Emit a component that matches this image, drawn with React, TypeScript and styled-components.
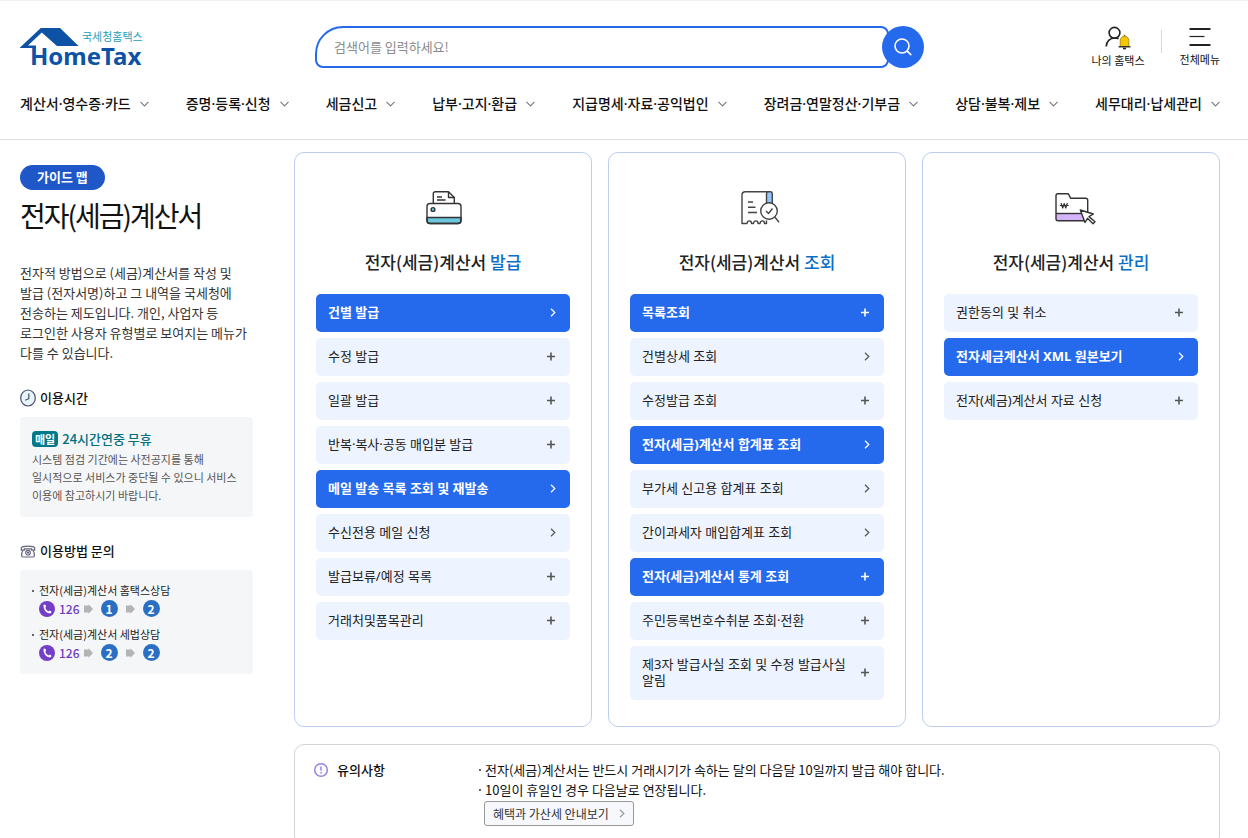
import React from 'react';
import styled, { createGlobalStyle, css } from 'styled-components';

const GlobalStyle = createGlobalStyle`
  *, *::before, *::after { box-sizing: border-box; }
  body {
    margin: 0;
    background: #fff;
    color: #222;
    font-family: "Noto Sans CJK KR", "Noto Sans", sans-serif;
    font-size: 13px;
    line-height: 20px;
    word-break: keep-all;
  }
  h1, h2, h3, p, ul, dl, dd { margin: 0; padding: 0; }
  ul { list-style: none; }
  a { color: inherit; text-decoration: none; }
  button, input { font-family: inherit; }
  svg { display: block; flex: none; overflow: visible; }
`;

const menuFont = '"Noto Sans", "Noto Sans CJK KR", sans-serif';

const Header = styled.header`
  border-top: 1px solid #f0f1f6;
  border-bottom: 1px solid #dfdfe2;
  padding: 25px 28px 0 20px;
`;

const HeaderTop = styled.div`
  display: flex;
  justify-content: space-between;
  align-items: flex-start;
`;

const LogoLink = styled.a`
  width: 295px;
  padding-top: 2px;
`;

const SearchForm = styled.form`
  flex: 1;
  max-width: 609px;
  display: flex;
  height: 42px;
`;

const SearchInput = styled.input`
  flex: 1;
  min-width: 0;
  border: 2px solid #256aec;
  border-radius: 28px 8px 8px 8px;
  padding: 0 16px 1px 17px;
  background: #fff;
  font-size: 13px;
  color: #222;
  outline: none;
  &::placeholder { color: #8a8a8a; opacity: 1; }
`;

const SearchButton = styled.button`
  width: 42px;
  height: 42px;
  margin-left: -7px;
  border: 0;
  border-radius: 50%;
  padding: 0;
  background: #256aec;
  display: grid;
  place-items: center;
`;

const Utilities = styled.div`
  display: flex;
  align-items: flex-start;
  justify-content: flex-end;
  width: 296px;
`;

const UtilityButton = styled.button`
  display: flex;
  flex-direction: column;
  align-items: center;
  gap: 2px;
  border: 0;
  padding: 0;
  background: none;
  color: #111;
  font-size: 11px;
  line-height: 16px;
`;

const UtilityDivider = styled.span`
  width: 1px;
  height: 23px;
  margin: 4px 18px 0 16px;
  background: #d5d7dc;
`;

const NavList = styled.ul`
  display: flex;
  justify-content: space-between;
  padding: 25px 0 24px;
`;

const NavLink = styled.a`
  display: flex;
  align-items: center;
  gap: 9px;
  color: #111;
  font-family: ${menuFont};
  font-size: 14px;
  font-weight: 500;
  line-height: 22px;
  white-space: nowrap;
`;

const Page = styled.div`
  display: flex;
  gap: 41px;
  padding: 12px 28px 16px 20px;
`;

const Sidebar = styled.aside`
  flex: 0 0 233px;
  padding-top: 13px;
`;

const GuideBadge = styled.span`
  display: inline-flex;
  align-items: center;
  height: 25px;
  padding: 0 17px 2px;
  border-radius: 13px;
  background: #1f57c8;
  color: #fff;
  font-size: 13px;
  font-weight: 700;
`;

const PageTitle = styled.h1`
  margin-top: 4px;
  color: #111;
  font-size: 28px;
  font-weight: 400;
  line-height: 42px;
  letter-spacing: -2px;
  white-space: nowrap;
`;

const Description = styled.p`
  margin-top: 27px;
  color: #333;
`;

const SideHeading = styled.h2<{ $spaced?: boolean }>`
  display: flex;
  align-items: center;
  gap: 4px;
  margin: ${({ $spaced }) => ($spaced ? '24px' : '25px')} 0 9px;
  color: #111;
  font-size: 13px;
  font-weight: 500;
  line-height: 20px;
`;

const InfoBox = styled.div`
  border-radius: 4px;
  background: #f5f6f8;
  padding: 12px;
`;

const HoursTitle = styled.p`
  display: flex;
  align-items: center;
  gap: 4px;
  color: #00707c;
  font-weight: 500;
`;

const DayTag = styled.span`
  border-radius: 4px;
  padding: 0 3px;
  background: #00798a;
  color: #fff;
  font-size: 11px;
  font-weight: 700;
  line-height: 16px;
`;

const HoursText = styled.p`
  color: #555;
  font-size: 11px;
  line-height: 18px;
  padding: 1px 0;
`;

const ContactList = styled.ul`
  display: grid;
  gap: 8px;
`;

const Contact = styled.li`
  display: grid;
  grid-template-columns: 7px 1fr;
  align-items: center;
  font-size: 11px;
  line-height: 17px;
  color: #222;
`;

const Bullet = styled.span`
  width: 2px;
  height: 2px;
  background: #666;
`;

const PhoneRow = styled.span`
  grid-column: 2;
  display: flex;
  align-items: center;
  height: 19px;
  color: #6d3cc0;
  font-size: 12px;
  font-weight: 500;
`;

const PhoneNumber = styled.span`
  margin: 0 4px;
`;

const Key = styled.span`
  display: inline-grid;
  place-items: center;
  width: 17px;
  height: 17px;
  margin: 0 8px;
  border-radius: 50%;
  background: #2b6fc4;
  color: #fff;
  font-weight: 700;
  line-height: 16px;
`;

const Main = styled.main`
  flex: 1;
  min-width: 0;
`;

const Cards = styled.div`
  display: grid;
  grid-template-columns: repeat(3, minmax(0, 1fr));
  gap: 16px;
`;

const Card = styled.section`
  border: 1px solid #bccdf0;
  border-radius: 10px;
  padding: 30px 21px 26px;
`;

const CardIcon = styled.div`
  display: flex;
  justify-content: center;
`;

const CardTitle = styled.h2`
  margin: 16px 0 19px;
  color: #222;
  font-size: 17px;
  font-weight: 500;
  line-height: 26px;
  text-align: center;
`;

const Accent = styled.span`
  color: #0a6fc9;
`;

const MenuList = styled.ul`
  display: grid;
  gap: 6px;
`;

const MenuButton = styled.button<{ $active?: boolean }>`
  display: flex;
  align-items: center;
  justify-content: space-between;
  width: 100%;
  min-height: 38px;
  border: 0;
  border-radius: 5px;
  padding: 10px 14px 12px 12px;
  background: #edf3ff;
  color: #222;
  font-family: ${menuFont};
  font-size: 13px;
  line-height: 16px;
  text-align: left;
  ${({ $active }) =>
    $active &&
    css`
      background: #256aec;
      color: #fff;
      font-weight: 700;
    `}
`;

const MenuLabel = styled.span`
  max-width: 206px;
`;

const MenuMark = styled.span<{ $active?: boolean }>`
  color: ${({ $active }) => ($active ? '#fff' : '#555')};
`;

const Notice = styled.section`
  display: grid;
  grid-template-columns: 165px 1fr;
  margin-top: 17px;
  border: 1px solid #d3d4d8;
  border-radius: 10px;
  padding: 15px 19px 19px;
`;

const NoticeTitle = styled.h2`
  display: flex;
  align-items: center;
  align-self: start;
  gap: 9px;
  color: #111;
  font-size: 13px;
  font-weight: 500;
  line-height: 20px;
`;

const NoticeItem = styled.li`
  display: flex;
  align-items: center;
  gap: 4px;
  color: #111;
`;

const NoticeButton = styled.button`
  display: flex;
  align-items: center;
  gap: 10px;
  height: 25px;
  margin: 1px 0 0 5px;
  border: 1px solid #999;
  border-radius: 3px;
  padding: 0 8px;
  background: #f7f8fc;
  color: #333;
  font-size: 12px;
`;

const Chevron = ({ stroke = 'currentColor' }: { stroke?: string }) => (
  <svg width="6" height="9" viewBox="0 0 6 9" fill="none" stroke={stroke} strokeWidth="1.2">
    <path d="M1 .8 4.8 4.5 1 8.2" />
  </svg>
);

const DownChevron = () => (
  <svg width="9" height="6" viewBox="0 0 9 6" fill="none" stroke="#777b88" strokeWidth="1.1">
    <path d="M.5 .8 4.5 4.9 8.5 .8" />
  </svg>
);

const Plus = () => (
  <svg width="9" height="9" viewBox="0 0 9 9" fill="none" stroke="currentColor" strokeWidth="1.6">
    <path d="M4 .5v8M0 4.5h8" />
  </svg>
);

const Logo = () => (
  <svg width="124" height="40" viewBox="0 0 124 40" role="img" aria-label="국세청홈택스 HomeTax">
    <path d="M0 19.6 20.8 0H40l18.6 18H37L21.8 4.6 8 17.6h8v2.4H0Z" fill="#0d52a5" />
    <text x="62" y="13" fontSize="11" fill="#1c9fb9" fontFamily="Noto Sans CJK KR, sans-serif">국세청홈택스</text>
    <text x="10" y="37" fontSize="24" fontWeight="700" fill="#0d52a5" fontFamily="Noto Sans, sans-serif">HomeTax</text>
  </svg>
);

const SearchIcon = () => (
  <svg width="18" height="18" viewBox="0 0 18 18" fill="none" stroke="#fff" strokeWidth="1.6" strokeLinecap="round">
    <circle cx="8" cy="8" r="7" />
    <path d="m13.2 13.2 3.6 3.4" />
  </svg>
);

const UserBellIcon = () => (
  <svg width="26" height="24" viewBox="0 0 26 24" fill="none" stroke="#222" strokeWidth="1.6">
    <circle cx="9.5" cy="6.8" r="5.4" />
    <path d="M1.2 20.5c.2-5 3.6-8.5 8.5-8.5 1.5 0 2.8.3 3.8.8" />
    <path d="M15.2 20.5v-6a4.3 4.3 0 0 1 8.6 0v6Z" fill="#f7c600" stroke="#9b7c00" strokeWidth=".8" />
    <path d="M19.5 8.8v1.6" stroke="#8a6d00" strokeWidth="1.4" />
    <path d="M13.5 20.8h12" strokeWidth="1.3" />
    <path d="M18 22.5h3" strokeWidth="1.6" />
  </svg>
);

const MenuIcon = () => (
  <svg width="22" height="23" viewBox="0 0 22 23" fill="none" stroke="#222">
    <path d="M.5 3h21M.5 19h21" strokeWidth="2" />
    <path d="M.5 10.5h15" strokeWidth="1.2" />
  </svg>
);

const ClockIcon = () => (
  <svg width="16" height="18" viewBox="0 0 16 18" fill="none" stroke="#4a4a70" strokeWidth="1.2">
    <ellipse cx="8" cy="9" rx="7.3" ry="8" fill="#e6f5f8" />
    <path d="M8.8 4.5v5.2L5.2 11.3" />
  </svg>
);

const TelephoneIcon = () => (
  <svg width="16" height="13" viewBox="0 0 16 13" fill="none" stroke="#62647c" strokeWidth="1.2">
    <path d="M1.3 5.2V3C2 .4 14 .4 14.7 3v2.2h-3V3.8H4.3v1.4Z" />
    <path d="M3 5.5C1.8 7 1.6 8.5 1.6 10.5q0 1.5 1.5 1.5h9.8q1.5 0 1.5-1.5c0-2-.2-3.5-1.4-5" />
    <circle cx="8" cy="7.7" r="2.3" />
    <circle cx="8" cy="7.7" r=".5" />
  </svg>
);

const PhoneIcon = () => (
  <svg width="16" height="16" viewBox="0 0 16 16">
    <circle cx="8" cy="8" r="8" fill="#743fc6" />
    <path d="M5.5 4.2c-.6 3.9 1.9 7.1 5.6 7.5" fill="none" stroke="#fff" strokeWidth="1.7" />
    <path d="m4.4 4 1.7-.6 1 2.1-1.5 1.2ZM9.4 10.4l1.5-.9 1.7 1.5-1 1.4Z" fill="#fff" />
  </svg>
);

const StepArrow = () => (
  <svg width="9" height="10" viewBox="0 0 9 10" fill="#b4b4b4">
    <path d="M0 1.5h4.5V.3L9 5 4.5 9.7V8.5H0Z" />
  </svg>
);

const NoticeIcon = () => (
  <svg width="14" height="14" viewBox="0 0 14 14" fill="none" stroke="#9583e8" strokeWidth="1.5">
    <circle cx="7" cy="7" r="6.3" />
    <path d="M7 3.5v4.2M7 9v1.5" />
  </svg>
);

const PrinterIcon = () => (
  <svg width="50" height="50" viewBox="0 0 50 50" fill="none" stroke="#333" strokeWidth="1.4" strokeLinejoin="round">
    <path d="M15.3 20.3V10.7a2 2 0 0 1 2-2h13.2l5.8 5.8v5.8" />
    <path d="M30.5 8.7v5.8h5.8" />
    <path d="M19 14h5M19 17h8.5" />
    <path d="M9 34.5h34v3a3 3 0 0 1-3 3H12a3 3 0 0 1-3-3Z" fill="#6cc6dc" />
    <rect x="9" y="20.5" width="34" height="20" rx="3" />
    <circle cx="15" cy="26.5" r="1.9" fill="#6cc6dc" />
  </svg>
);

const ReceiptIcon = () => (
  <svg width="50" height="50" viewBox="0 0 50 50" fill="none" stroke="#444" strokeWidth="1.4" strokeLinejoin="round">
    <path d="M34.5 37.5V40.5h-2c0-3.5-4-3.5-4.5 0h-2c0-3.5-4-3.5-4.5 0h-2c0-3.5-4-3.5-4.5 0H10V12a3.3 3.3 0 0 1 3.3-3.3H38" />
    <path d="M34.5 20.5V10.5a2 2 0 0 1 2-1.8h1.8a2 2 0 0 1 2 1.8v10Z" fill="#90c6fa" />
    <path d="M16 19h5M16 24.3h7.5M16 29.5h9" />
    <circle cx="37" cy="28" r="8.3" fill="#fff" />
    <path d="m34 28 2.5 2.5 4-5M43 34.2l4 5" />
  </svg>
);

const FolderIcon = () => (
  <svg width="50" height="50" viewBox="0 0 50 50" fill="none" stroke="#333" strokeWidth="1.4" strokeLinejoin="round">
    <path d="M10 30.5h30v7.2H12a2 2 0 0 1-2-2Z" fill="#d3b4fb" stroke="none" />
    <path d="M10 30.5h28" />
    <path d="M38 37.7H12a2 2 0 0 1-2-2v-23a2 2 0 0 1 2-2h10.2l2.5 4.6h15a2 2 0 0 1 2 2v12" />
    <path d="m15 20 1.7 5 1.5-4.5 1.5 4.5 1.7-5M13.7 22.5h9" strokeWidth="1.2" />
    <path d="m34.3 27 13 4-4.3 2.6 6 5.2-2 2-5.5-5.5-2.5 4.2Z" fill="#fff" />
  </svg>
);

const navItems = [
  '계산서·영수증·카드',
  '증명·등록·신청',
  '세금신고',
  '납부·고지·환급',
  '지급명세·자료·공익법인',
  '장려금·연말정산·기부금',
  '상담·불복·제보',
  '세무대리·납세관리',
];

type Entry = { label: string; mark: 'plus' | 'go'; active?: boolean };

const groups: { accent: string; icon: React.ReactNode; entries: Entry[] }[] = [
  {
    accent: '발급',
    icon: <PrinterIcon />,
    entries: [
      { label: '건별 발급', mark: 'go', active: true },
      { label: '수정 발급', mark: 'plus' },
      { label: '일괄 발급', mark: 'plus' },
      { label: '반복·복사·공동 매입분 발급', mark: 'plus' },
      { label: '메일 발송 목록 조회 및 재발송', mark: 'go', active: true },
      { label: '수신전용 메일 신청', mark: 'go' },
      { label: '발급보류/예정 목록', mark: 'plus' },
      { label: '거래처및품목관리', mark: 'plus' },
    ],
  },
  {
    accent: '조회',
    icon: <ReceiptIcon />,
    entries: [
      { label: '목록조회', mark: 'plus', active: true },
      { label: '건별상세 조회', mark: 'go' },
      { label: '수정발급 조회', mark: 'plus' },
      { label: '전자(세금)계산서 합계표 조회', mark: 'go', active: true },
      { label: '부가세 신고용 합계표 조회', mark: 'go' },
      { label: '간이과세자 매입합계표 조회', mark: 'go' },
      { label: '전자(세금)계산서 통계 조회', mark: 'plus', active: true },
      { label: '주민등록번호수취분 조회·전환', mark: 'plus' },
      { label: '제3자 발급사실 조회 및 수정 발급사실 알림', mark: 'plus' },
    ],
  },
  {
    accent: '관리',
    icon: <FolderIcon />,
    entries: [
      { label: '권한동의 및 취소', mark: 'plus' },
      { label: '전자세금계산서 XML 원본보기', mark: 'go', active: true },
      { label: '전자(세금)계산서 자료 신청', mark: 'plus' },
    ],
  },
];

const contacts = [
  { name: '전자(세금)계산서 홈택스상담', keys: ['1', '2'] },
  { name: '전자(세금)계산서 세법상담', keys: ['2', '2'] },
];

export default function App() {
  return (
    <>
      <GlobalStyle />
      <Header>
        <HeaderTop>
          <LogoLink href="#home"><Logo /></LogoLink>
          <SearchForm role="search" onSubmit={(e) => e.preventDefault()}>
            <SearchInput type="text" aria-label="검색어" placeholder="검색어를 입력하세요!" />
            <SearchButton type="submit" aria-label="검색"><SearchIcon /></SearchButton>
          </SearchForm>
          <Utilities>
            <UtilityButton type="button"><UserBellIcon />나의 홈택스</UtilityButton>
            <UtilityDivider />
            <UtilityButton type="button"><MenuIcon />전체메뉴</UtilityButton>
          </Utilities>
        </HeaderTop>
        <nav>
          <NavList>
            {navItems.map((item) => (
              <li key={item}>
                <NavLink href="#menu">{item}<DownChevron /></NavLink>
              </li>
            ))}
          </NavList>
        </nav>
      </Header>
      <Page>
        <Sidebar>
          <GuideBadge>가이드 맵</GuideBadge>
          <PageTitle>전자(세금)계산서</PageTitle>
          <Description>
            전자적 방법으로 (세금)계산서를 작성 및 발급 (전자서명)하고 그 내역을 국세청에 전송하는 제도입니다. 개인, 사업자 등 로그인한 사용자 유형별로 보여지는 메뉴가 다를 수 있습니다.
          </Description>
          <SideHeading><ClockIcon />이용시간</SideHeading>
          <InfoBox>
            <HoursTitle><DayTag>매일</DayTag>24시간연중 무휴</HoursTitle>
            <HoursText>
              시스템 점검 기간에는 사전공지를 통해 일시적으로 서비스가 중단될 수 있으니 서비스 이용에 참고하시기 바랍니다.
            </HoursText>
          </InfoBox>
          <SideHeading $spaced><TelephoneIcon />이용방법 문의</SideHeading>
          <InfoBox>
            <ContactList>
              {contacts.map(({ name, keys }) => (
                <Contact key={name}>
                  <Bullet />
                  <span>{name}</span>
                  <PhoneRow>
                    <PhoneIcon />
                    <PhoneNumber>126</PhoneNumber>
                    {keys.map((k, i) => (
                      <React.Fragment key={i}>
                        <StepArrow />
                        <Key>{k}</Key>
                      </React.Fragment>
                    ))}
                  </PhoneRow>
                </Contact>
              ))}
            </ContactList>
          </InfoBox>
        </Sidebar>
        <Main>
          <Cards>
            {groups.map(({ accent, icon, entries }) => (
              <Card key={accent}>
                <CardIcon>{icon}</CardIcon>
                <CardTitle>전자(세금)계산서 <Accent>{accent}</Accent></CardTitle>
                <MenuList>
                  {entries.map(({ label, mark, active }) => (
                    <li key={label}>
                      <MenuButton type="button" $active={active}>
                        <MenuLabel>{label}</MenuLabel>
                        <MenuMark $active={active}>{mark === 'plus' ? <Plus /> : <Chevron />}</MenuMark>
                      </MenuButton>
                    </li>
                  ))}
                </MenuList>
              </Card>
            ))}
          </Cards>
          <Notice>
            <NoticeTitle><NoticeIcon />유의사항</NoticeTitle>
            <div>
              <ul>
                <NoticeItem><Bullet />전자(세금)계산서는 반드시 거래시기가 속하는 달의 다음달 10일까지 발급 해야 합니다.</NoticeItem>
                <NoticeItem><Bullet />10일이 휴일인 경우 다음날로 연장됩니다.</NoticeItem>
              </ul>
              <NoticeButton type="button">혜택과 가산세 안내보기<Chevron stroke="#999" /></NoticeButton>
            </div>
          </Notice>
        </Main>
      </Page>
    </>
  );
}
